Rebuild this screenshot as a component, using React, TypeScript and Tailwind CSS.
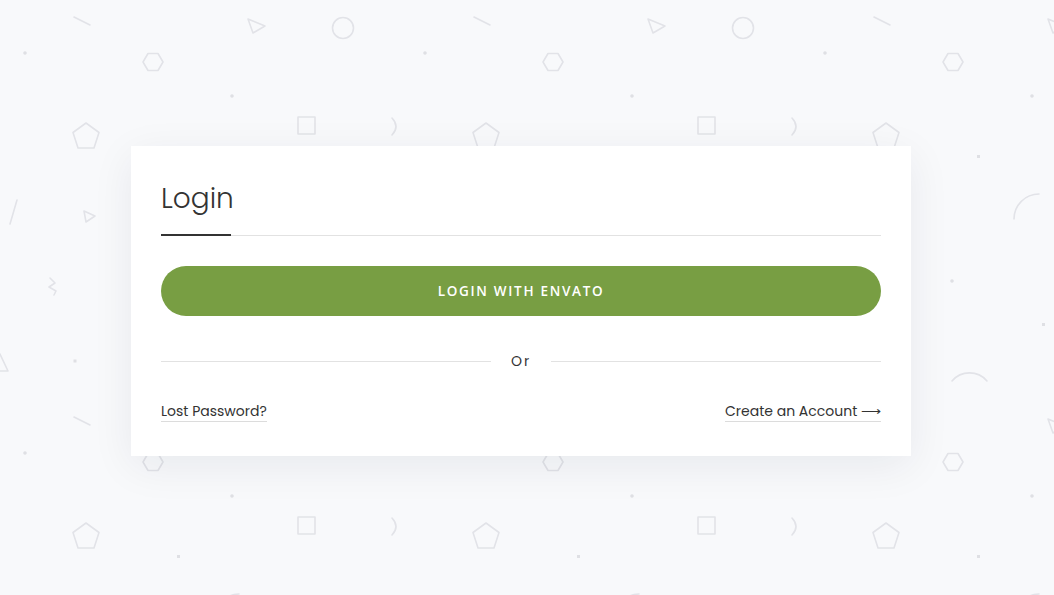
const sans = { fontFamily: "Poppins, Inter, 'Noto Sans', sans-serif" };

// one 400x400 tile of the faint shape wallpaper
const Tile = () => (
  <g fill="none" stroke="#e2e3e8" strokeWidth="1.6" strokeLinejoin="round" strokeLinecap="round">
    <line x1="74" y1="17" x2="90" y2="25" />
    <polygon points="248,19 265,26 253,33" />
    <circle cx="343" cy="28" r="10.5" />
    <circle cx="25" cy="53" r="1.8" fill="#dfe0e4" stroke="none" />
    <polygon points="143,62 148,53.5 158,53.5 163,62 158,70.5 148,70.5" />
    <circle cx="232" cy="96" r="1.8" fill="#dfe0e4" stroke="none" />
    <polygon points="86,123 99,132.5 94,148 78,148 73,132.5" />
    <rect x="298" y="117" width="17" height="17" />
    <path d="M392 118 Q400 126.5 392 135" />
    <rect x="177" y="155" width="3" height="3" fill="#dfe0e4" stroke="none" />
    <line x1="17" y1="200" x2="10" y2="224" />
    <polygon points="84,211 95,216 86,222" />
    <path d="M214 219 A25 25 0 0 1 239 194" />
    <path d="M50 278 L55 283 L49 287 L56 291 L54 295" />
    <circle cx="152" cy="281" r="1.8" fill="#dfe0e4" stroke="none" />
    <rect x="242" y="323" width="3" height="3" fill="#dfe0e4" stroke="none" />
    <polygon points="-10,371 0,354 8,371" />
    <polygon points="390,371 400,354 408,371" />
    <rect x="73.5" y="359.5" width="3" height="3" fill="#dfe0e4" stroke="none" />
    <path d="M152 381 A23 23 0 0 1 187 381" />
  </g>
);

export default function App() {
  return (
    <div className="relative min-h-screen overflow-hidden bg-[#f8f9fb]">
      <svg className="absolute inset-0 h-full w-full" aria-hidden="true">
        <defs>
          <pattern id="shapes" width="400" height="400" patternUnits="userSpaceOnUse">
            <Tile />
          </pattern>
        </defs>
        <rect width="100%" height="100%" fill="url(#shapes)" />
      </svg>

      <div className="relative flex min-h-screen items-center justify-center pr-[12px] pt-[7px]">
        <div className="w-[780px] bg-white px-[30px] pt-[33px] pb-[34px] shadow-[0_10px_40px_rgba(20,30,60,0.07)]">
          <div className="relative border-b border-[#e2e2e2] pb-[16px]">
            <h1 className="text-[28px] leading-[40px] font-light text-[#333]" style={sans}>
              Login
            </h1>
            <span className="absolute -bottom-px left-0 h-[2px] w-[70px] bg-[#333]" />
          </div>

          <button
            className="mt-[30px] flex h-[50px] w-full items-center justify-center rounded-full bg-[#789e43] text-[13.5px] font-semibold tracking-[1.7px] text-white"
            style={{ fontFamily: "'Open Sans', sans-serif" }}
          >
            LOGIN WITH ENVATO
          </button>

          <div className="mt-[35px] flex items-center">
            <span className="h-px flex-1 bg-[#e2e2e2]" />
            <span className="px-[20px] text-[14px] leading-[20px] tracking-[2px] text-[#333]" style={sans}>
              Or
            </span>
            <span className="h-px flex-1 bg-[#e2e2e2]" />
          </div>

          <div className="mt-[30px] flex items-center justify-between text-[14px] leading-[20px] text-[#333]" style={sans}>
            <a href="#" className="border-b border-[#dcdcdc]">
              Lost Password?
            </a>
            <a href="#" className="border-b border-[#dcdcdc]">
              Create an Account{" "}
              <span style={{ fontFamily: "'Liberation Sans', sans-serif" }}>⟶</span>
            </a>
          </div>
        </div>
      </div>
    </div>
  );
}
